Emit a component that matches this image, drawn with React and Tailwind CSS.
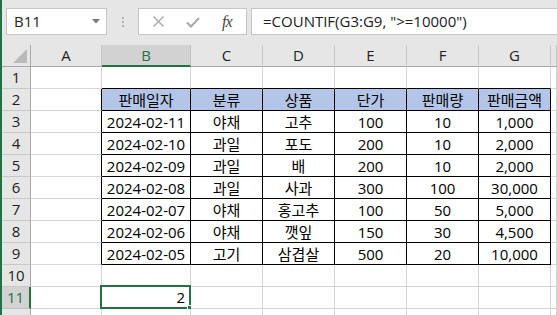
import React from 'react';

const COLS = ['A', 'B', 'C', 'D', 'E', 'F', 'G', 'H'];

const HEAD = ['판매일자', '분류', '상품', '단가', '판매량', '판매금액'];
const DATA = [
  ['2024-02-11', '야채', '고추', '100', '10', '1,000'],
  ['2024-02-10', '과일', '포도', '200', '10', '2,000'],
  ['2024-02-09', '과일', '배', '200', '10', '2,000'],
  ['2024-02-08', '과일', '사과', '300', '100', '30,000'],
  ['2024-02-07', '야채', '홍고추', '100', '50', '5,000'],
  ['2024-02-06', '야채', '깻잎', '150', '30', '4,500'],
  ['2024-02-05', '고기', '삼겹살', '500', '20', '10,000'],
];

const font = "font-['Open_Sans','Noto_Sans_CJK_KR',sans-serif]";

function FormulaBar() {
  return (
    <div className="h-[45px] bg-[#e6e6e6] flex items-start pt-2 pl-[4px] gap-0">
      <div className="w-[101px] h-[27px] bg-white border border-[#c6c6c6] flex items-center justify-between pl-[7px] pr-[6px]">
        <span className="text-[15px] text-[#222]">B11</span>
        <svg width="8" height="5" viewBox="0 0 8 5"><path d="M0 0h8L4 4.5z" fill="#777" /></svg>
      </div>
      <div className="w-[31px] h-[27px] flex flex-col items-center justify-center gap-[2px]">
        <span className="w-[2px] h-[2px] bg-[#b0b0b0]" />
        <span className="w-[2px] h-[2px] bg-[#b0b0b0]" />
        <span className="w-[2px] h-[2px] bg-[#b0b0b0]" />
      </div>
      <div className="w-[109px] h-[27px] bg-white border border-[#c6c6c6] flex items-center pl-[13px]">
        <svg width="13" height="13" viewBox="0 0 13 13"><path d="M1.5 1.5l10 10M11.5 1.5l-10 10" stroke="#a8a8a8" strokeWidth="1.4" /></svg>
        <svg className="ml-[21px]" width="14" height="12" viewBox="0 0 14 12"><path d="M1 6.5l4 4L13 2" stroke="#a8a8a8" strokeWidth="2" fill="none" /></svg>
        <span className="ml-[22px] text-[16px] italic text-[#444] font-['Liberation_Serif',serif] tracking-[-1px] leading-none">fx</span>
      </div>
      <div className="ml-[4px] flex-1 h-[27px] bg-white border border-[#c6c6c6] border-r-0 flex items-center pl-[11px]">
        <span className="text-[15px] text-[#222] whitespace-pre">=COUNTIF(G3:G9, "&gt;=10000")</span>
      </div>
    </div>
  );
}

function ColHeader() {
  return (
    <>
      <div className="bg-[#e6e6e6] border-r border-b border-[#a9a9a9] relative">
        <svg className="absolute right-[3px] bottom-[3px]" width="14" height="14" viewBox="0 0 14 14"><path d="M14 0V14H0z" fill="#b9b9b9" /></svg>
      </div>
      {COLS.map((c) => (
        <div
          key={c}
          className={
            c === 'B'
              ? 'bg-[#d2d2d2] text-[#217346] border-r border-[#c0c0c0] border-b-2 border-b-[#217346] flex items-center justify-center text-[15px]'
              : 'bg-[#e6e6e6] text-[#222] border-r border-[#c8c8c8] border-b border-b-[#a9a9a9] flex items-center justify-center text-[15px]'
          }
        >
          {c === 'H' ? '' : c}
        </div>
      ))}
    </>
  );
}

function cellValue(r, c) {
  if (r === 2 && c >= 1 && c <= 6) return HEAD[c - 1];
  if (r >= 3 && r <= 9 && c >= 1 && c <= 6) return DATA[r - 3][c - 1];
  return '';
}

function Cell({ r, c }) {
  const rightBlack = r >= 2 && r <= 9 && c <= 6;
  const bottomBlack = r >= 1 && r <= 9 && c >= 1 && c <= 6;
  const head = r === 2 && c >= 1 && c <= 6;
  const sel = r === 11 && c === 1;
  return (
    <div
      className={[
        'relative flex items-center justify-center pt-px text-[15px] text-black border-r border-b',
        rightBlack ? 'border-r-black' : 'border-r-[#d4d4d4]',
        bottomBlack ? 'border-b-black' : 'border-b-[#d4d4d4]',
        head ? 'bg-[#b4c6e7]' : 'bg-white',
      ].join(' ')}
    >
      {cellValue(r, c)}
      {sel && (
        <>
          <div className="absolute left-[-2px] top-[-2px] right-[-1px] bottom-[-1px] border-2 border-[#217346] flex items-center justify-end pr-[4px] pt-px">
            2
          </div>
          <div className="absolute right-[-4px] bottom-[-4px] w-[7px] h-[7px] bg-[#217346] border border-white" />
        </>
      )}
    </div>
  );
}

function Row({ r }) {
  const sel = r === 11;
  return (
    <>
      <div
        className={
          sel
            ? 'bg-[#d2d2d2] text-[#217346] border-b border-[#c0c0c0] border-r-2 border-r-[#217346] flex items-center justify-center text-[15px]'
            : 'bg-[#e6e6e6] text-[#222] border-b border-[#c8c8c8] border-r border-r-[#a9a9a9] flex items-center justify-center text-[15px]'
        }
      >
        {r <= 11 ? r : ''}
      </div>
      {COLS.map((_, c) => (
        <Cell key={c} r={r} c={c} />
      ))}
    </>
  );
}

export default function App() {
  const rows = [1, 2, 3, 4, 5, 6, 7, 8, 9, 10, 11, 12];
  return (
    <div className={`w-[557px] h-[315px] overflow-hidden bg-white border-l-2 border-[#217346] ${font}`}>
      <FormulaBar />
      <div className="grid grid-cols-[29px_71px_89px_72px_72px_72px_72px_72px_1fr] auto-rows-[22px]">
        <ColHeader />
        {rows.map((r) => (
          <Row key={r} r={r} />
        ))}
      </div>
    </div>
  );
}
